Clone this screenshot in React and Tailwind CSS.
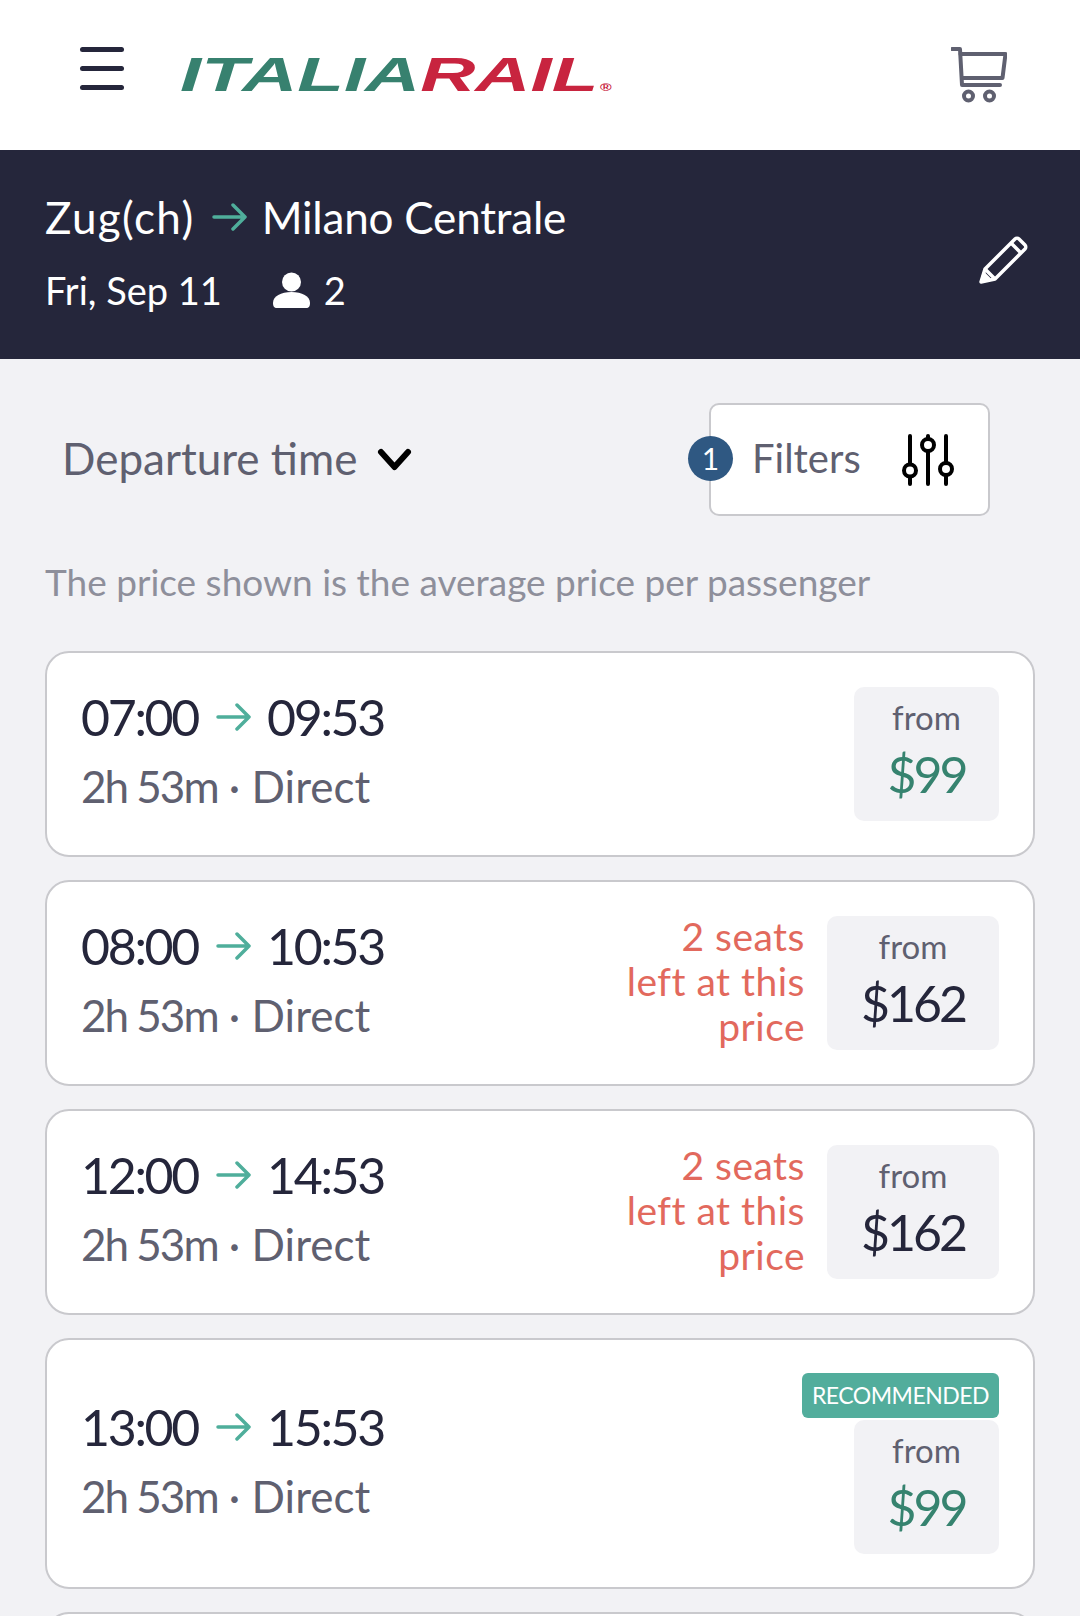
const TRIPS = [
  { from: '07:00', to: '09:53', price: '$99', cheap: true },
  { from: '08:00', to: '10:53', price: '$162', seats: true },
  { from: '12:00', to: '14:53', price: '$162', seats: true },
  { from: '13:00', to: '15:53', price: '$99', cheap: true, recommended: true },
]

function Arrow({ className }) {
  return (
    <svg viewBox="0 0 35 30" fill="none" stroke="#4fae9b" strokeWidth="3.500" strokeLinecap="round" strokeLinejoin="round" className={className}>
      <path d="M2 15h31M21 3l12 12-12 12" />
    </svg>
  )
}

function Cart() {
  return (
    <svg viewBox="0 0 56 56" fill="none" stroke="#5f6070" strokeWidth="4" strokeLinecap="round" strokeLinejoin="round" className="w-[56px] h-[56px]">
      <path d="M1 2h8l2 36h38" />
      <path d="M9.500 7h45l-3 24H11" />
      <circle cx="17.500" cy="49" r="4.500" />
      <circle cx="38.500" cy="49" r="4.500" />
    </svg>
  )
}

function Pencil() {
  return (
    <svg viewBox="0 0 49 48" fill="none" stroke="#fff" strokeWidth="3.500" strokeLinejoin="round" className="w-[49px] h-[48px] mt-[10px]">
      <path d="M2 46l4-13L36 3c1-1 3-1 4 0l6 6c1 1 1 3 0 4L16 43z" />
      <path d="M6 33l10 10M32 7l10 10" />
      <path d="M3 45l2-7 5 5z" fill="#fff" />
    </svg>
  )
}

function Sliders() {
  return (
    <svg viewBox="0 0 52 52" fill="none" stroke="#000" strokeWidth="4" strokeLinecap="round" className="w-[52px] h-[52px]">
      <path d="M8 2v28M8 43v7M26 2v2M26 18v32M44 2v26M44 42v8" />
      <circle cx="8" cy="36.500" r="6" />
      <circle cx="26" cy="11" r="6" />
      <circle cx="44" cy="35" r="6" />
    </svg>
  )
}

function PriceBox({ price, cheap, wide }) {
  return (
    <div className={`flex flex-col items-center justify-center h-[134px] pb-[4px] rounded-[10px] bg-[#f2f2f5] ${wide ? 'w-[172px]' : 'w-[145px]'}`}>
      <div className="mb-[4px] text-[33px] leading-[40px] text-[#5f6070]">from</div>
      <div className={`text-[50px] leading-[66px] tracking-[-3px] ${cheap ? 'text-[#36836f]' : 'text-[#25263b]'}`}>{price}</div>
    </div>
  )
}

function TripCard({ trip }) {
  return (
    <div className={`flex items-center justify-between rounded-[24px] border-2 border-[#c9c9cd] bg-white px-[34px] ${trip.recommended ? 'h-[251px]' : 'h-[206px]'}`}>
      <div className="mb-[8px]">
        <div className="flex items-center text-[50px] leading-[66px] text-[#25263b]">
          <span className="w-[117px] text-right tracking-[-2.300px]">{trip.from}</span>
          <Arrow className="w-[35px] h-[30px] ml-[18px] mr-[16px]" />
          <span className="w-[117px] text-right tracking-[-2.300px]">{trip.to}</span>
        </div>
        <div className="mt-[6px] text-[44px] leading-[60px] text-[#5f6070]">
          <span className="tracking-[-2px]">2h 53m</span>
          <span> · </span>
          <span>Direct</span>
        </div>
      </div>
      {trip.recommended ? (
        <div className="flex flex-col items-end">
          <div className="flex items-center justify-center w-[197px] h-[45px] rounded-[6px] bg-[#52ad9c] text-[23px] tracking-[-0.500px] text-white">RECOMMENDED</div>
          <div className="mt-[2px]">
            <PriceBox price={trip.price} cheap={trip.cheap} />
          </div>
        </div>
      ) : (
        <div className="flex items-center">
          {trip.seats && (
            <div className="mr-[22px] mb-[4px] text-right text-[39px] leading-[45px] tracking-[0.500px] text-[#e2695d]">
              2 seats
              <br />
              left at this
              <br />
              price
            </div>
          )}
          <PriceBox price={trip.price} cheap={trip.cheap} wide={trip.seats} />
        </div>
      )}
    </div>
  )
}

export default function App() {
  return (
    <div className="h-[1616px] overflow-hidden bg-[#f2f2f5] font-['Lato',sans-serif]">
      <header className="flex items-center justify-between h-[150px] bg-white pl-[80px] pr-[73px]">
        <div className="flex items-center">
          <div className="flex flex-col gap-[14px] w-[44px] mb-[14px]">
            <div className="h-[5px] rounded-full bg-[#25263b]" />
            <div className="h-[5px] rounded-full bg-[#25263b]" />
            <div className="h-[5px] rounded-full bg-[#25263b]" />
          </div>
          <div className="ml-[56px] w-[430px] origin-left scale-x-[1.59] whitespace-nowrap font-['Liberation_Sans',sans-serif] text-[48px] leading-none font-bold italic">
            <span className="text-[#37816f]">ITALIA</span>
            <span className="text-[#c8243f]">RAIL</span>
            <span className="ml-[1px] text-[10px] text-[#c8243f]">®</span>
          </div>
        </div>
        <Cart />
      </header>

      <section className="flex items-center justify-between h-[209px] bg-[#25263b] pl-[45px] pr-[52px] text-white">
        <div className="mb-[8px]">
          <div className="flex items-center text-[44px] leading-[60px]">
            <span className="tracking-[1.400px]">Zug(ch)</span>
            <Arrow className="w-[35px] h-[30px] ml-[17px] mr-[15px]" />
            <span className="tracking-[-0.200px]">Milano Centrale</span>
          </div>
          <div className="flex items-center mt-[18px] text-[38px] leading-[50px]">
            Fri, Sep 11
            <svg viewBox="0 0 37 36" fill="#fff" className="w-[37px] h-[36px] ml-[51px] mr-[14px]">
              <circle cx="18.500" cy="10" r="9.500" />
              <path d="M0 31c0-7 8-11 18.500-11S37 24 37 31c0 3-1 5-4 5H4c-3 0-4-2-4-5z" />
            </svg>
            2
          </div>
        </div>
        <Pencil />
      </section>

      <div className="px-[45px]">
        <div className="flex items-center justify-between pt-[44px] pl-[17px] pr-[45px]">
          <div className="flex items-center text-[#5f6070]">
            <span className="mb-[4px] text-[44px]">Departure time</span>
            <svg viewBox="0 0 35 24" fill="none" stroke="#000" strokeWidth="6" strokeLinecap="round" strokeLinejoin="round" className="w-[35px] h-[24px] ml-[20px]">
              <path d="M4 4l13.500 15L31 4" />
            </svg>
          </div>
          <div className="relative flex items-center justify-between w-[281px] h-[113px] rounded-[10px] border-2 border-[#c9c9cd] bg-white pl-[41px] pr-[34px]">
            <div className="absolute left-[-23px] top-[31px] flex items-center justify-center w-[45px] h-[45px] rounded-full bg-[#2f5882] text-[30px] text-white">1</div>
            <span className="mb-[4px] text-[40px] text-[#5f6070]">Filters</span>
            <Sliders />
          </div>
        </div>
        <p className="mt-[43px] text-[37px] leading-[46px] text-[#8e8f9b]">The price shown is the average price per passenger</p>
        <div className="flex flex-col gap-[23px] mt-[46px]">
          {TRIPS.map(t => (
            <TripCard key={t.from} trip={t} />
          ))}
          <div className="h-[205px] rounded-[24px] border-2 border-[#c9c9cd] bg-white" />
        </div>
      </div>
    </div>
  )
}
